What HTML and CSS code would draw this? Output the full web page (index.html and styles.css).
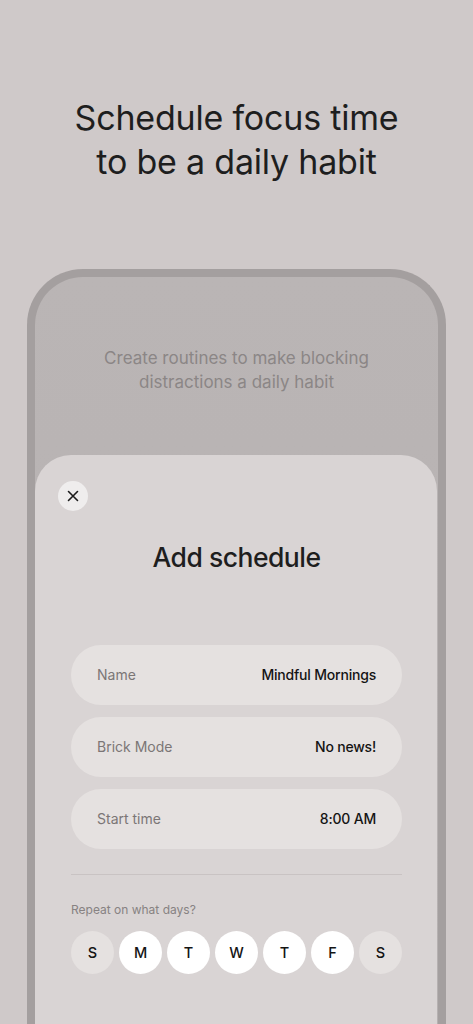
FILE: index.html
```html
<!DOCTYPE html>
<html lang="en">
<head>
    <meta charset="UTF-8">
    <meta name="viewport" content="width=device-width, initial-scale=1.0">
    <title>Schedule focus time</title>
    <link rel="stylesheet" href="styles.css">
</head>
<body>

    <h1 class="headline">Schedule focus time<br>to be a daily habit</h1>

    <div class="phone">
        <p class="phone-subtitle">Create routines to make blocking<br>distractions a daily habit</p>

        <div class="sheet">
            <button class="close-btn" aria-label="Close">
                <svg width="12" height="12" viewBox="0 0 12 12">
                    <path d="M1.5 1.5 L10.5 10.5 M10.5 1.5 L1.5 10.5" stroke="#1c1c1c" stroke-width="1.6" stroke-linecap="round"/>
                </svg>
            </button>

            <h2 class="sheet-title">Add schedule</h2>

            <div class="fields">
                <div class="field">
                    <span class="field-label">Name</span>
                    <span class="field-value">Mindful Mornings</span>
                </div>
                <div class="field">
                    <span class="field-label">Brick Mode</span>
                    <span class="field-value">No news!</span>
                </div>
                <div class="field">
                    <span class="field-label">Start time</span>
                    <span class="field-value">8:00 AM</span>
                </div>
            </div>

            <hr class="divider">

            <div class="repeat-label">Repeat on what days?</div>
            <div class="days">
                <button class="day">S</button>
                <button class="day on">M</button>
                <button class="day on">T</button>
                <button class="day on">W</button>
                <button class="day on">T</button>
                <button class="day on">F</button>
                <button class="day">S</button>
            </div>
        </div>
    </div>

</body>
</html>
```

FILE: styles.css
```css
* {
    box-sizing: border-box;
}

html, body {
    height: 100%;
    overflow: hidden;
}

body {
    margin: 0;
    background-color: #cfc9c9;
    font-family: "Inter", "Noto Sans", sans-serif;
    color: #1c1c1c;
}

.headline {
    margin: 96px 0 0;
    font-size: 34px;
    line-height: 44px;
    font-weight: 400;
    text-align: center;
    letter-spacing: -0.2px;
    color: #1e1e1e;
}

.phone {
    width: 419px;
    margin: 85px auto 0;
    border: 8px solid #a49f9f;
    border-bottom: none;
    border-radius: 56px 56px 0 0;
    background: linear-gradient(#bab5b5, #b5b0b0);
    padding-top: 69px;
}

.phone-subtitle {
    margin: 0;
    font-size: 17px;
    line-height: 24px;
    text-align: center;
    color: #8b8686;
}

.sheet {
    margin-top: 61px;
    margin-right: 1px;
    background-color: #d9d4d4;
    border-radius: 36px 36px 0 0;
    padding: 26px 35px 140px 36px;
}

.close-btn {
    display: flex;
    justify-content: center;
    align-items: center;
    width: 30px;
    height: 30px;
    margin-left: -13px;
    padding: 0;
    border: none;
    border-radius: 50%;
    background-color: #efeded;
}

.sheet-title {
    margin: 29px 0 0;
    font-size: 26.5px;
    line-height: 34px;
    font-weight: 500;
    text-align: center;
    letter-spacing: -0.5px;
    color: #1e1e1e;
}

.fields {
    display: flex;
    flex-direction: column;
    gap: 12px;
    margin-top: 71px;
}

.field {
    display: flex;
    justify-content: space-between;
    align-items: center;
    height: 60px;
    padding: 0 26px 2px;
    border-radius: 30px;
    background-color: #e5e1e0;
    font-size: 14px;
}

.field-label {
    color: #7b7676;
}

.field-value {
    font-weight: 500;
    letter-spacing: -0.2px;
    color: #141414;
}

.divider {
    margin: 25px 0 0;
    border: none;
    border-top: 1px solid #c9c3c3;
}

.repeat-label {
    margin-top: 26px;
    font-size: 12px;
    line-height: 18px;
    color: #878282;
}

.days {
    display: flex;
    gap: 5px;
    margin-top: 12px;
}

.day {
    width: 43px;
    height: 43px;
    padding: 0;
    border: none;
    border-radius: 50%;
    background-color: #e5e1e0;
    font-family: inherit;
    font-size: 14.5px;
    font-weight: 500;
    color: #141414;
}

.day.on {
    background-color: #ffffff;
}
```
